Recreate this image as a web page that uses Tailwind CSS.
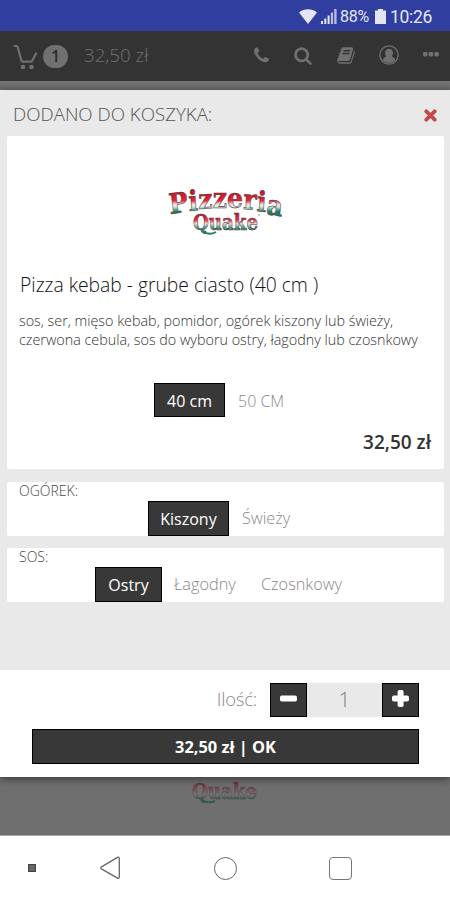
<!DOCTYPE html>
<html lang="pl">
<head>
<meta charset="utf-8">
<title>Pizzeria Quake</title>
<script src="https://cdn.jsdelivr.net/npm/@tailwindcss/browser@4"></script>
</head>
<body class="w-[450px] h-[900px] overflow-hidden flex flex-col bg-white font-['Open_Sans',sans-serif]">

<div class="h-[31px] shrink-0 bg-[#303f9f] flex items-center justify-end pr-[18px] pt-[2px] text-[#e3e5f5] font-['Roboto',sans-serif]">
  <svg class="w-[18px] h-[15px] mr-[4px]" viewBox="0 0 18 15" fill="currentColor"><path d="M0 3.5C5-.8 13-.8 18 3.5L9 15z"/></svg>
  <svg class="w-[16px] h-[15px] mr-[3px]" viewBox="0 0 16 15" fill="currentColor"><path d="M0 12h2v3H0zM3.300 9.500h2V15h-2zM6.600 6.500h2V15h-2z"/><path opacity=".75" d="M9.900 3.500h2.200V15H9.900zM13.200 0h2.400v15h-2.400z"/></svg>
  <span class="text-[16px] leading-[18px] mr-[6px] tracking-[-0.300px]">88%</span>
  <svg class="w-[11px] h-[15px] mr-[4px]" viewBox="0 0 11 15" fill="currentColor"><path d="M3 0h5v1.500h3V15H0V1.500h3z"/></svg>
  <span class="text-[17.500px] leading-[18px] tracking-[-0.3px]">10:26</span>
</div>

<header class="h-[50px] shrink-0 bg-[#333] flex items-center text-[#707070] pl-[13px] pr-[11px]">
  <svg class="w-[25px] h-[26px] mt-[1px]" viewBox="0 0 25 26" fill="none" stroke="currentColor" stroke-width="2.200" stroke-linecap="round" stroke-linejoin="round"><path d="M1.500 2h1.800q1 0 1.400 1.200l3.600 13q.4 1.500 1.900 1.500h7.500q1.200 0 1.700-1.200L23 9.500"/><circle cx="10" cy="23" r="1.200" fill="currentColor"/><circle cx="18.500" cy="23" r="1.200" fill="currentColor"/></svg>
  <span class="w-[25px] h-[23px] ml-[5px] rounded-full bg-[#707070] text-[#2b2b2b] font-semibold text-[16px] leading-[23px] text-center">1</span>
  <span class="ml-[16px] text-[18.700px] font-light leading-6 w-[70px] whitespace-nowrap mb-[2px]">32,50 zł</span>
  <div class="flex-1"></div>
  <svg class="w-[19px] h-[19px] mr-[22px] mb-[2px]" viewBox="0 0 1792 1792" fill="currentColor"><path d="M1600 1240q0 27-10 70.500t-21 68.500q-21 50-122 106-94 51-186 51-27 0-53-3.500t-57.500-12.500-47-14.500-55.500-20.500-49-18q-98-35-175-83-127-79-264-216t-216-264q-48-77-83-175-3-9-18-49t-20.500-55.500-14.500-47-12.500-57.500-3.500-53q0-92 51-186 56-101 106-122 25-11 68.500-21t70.500-10q14 0 21 3 18 6 53 76 11 19 30 54t35 63.500 31 53.500q3 4 17.500 25t21.500 35.500 7 28.500q0 20-28.500 50t-62 55-62 53-28.500 46q0 9 5 22.500t8.500 20.500 14 24 11.500 19q76 137 174 235t235 174q2 1 19 11.500t24 14 20.500 8.500 22.500 5q18 0 46-28.500t53-62 55-62 50-28.500q14 0 28.500 7t35.500 21.500 25 17.500q25 15 53.500 31t63.500 35 54 30q70 35 76 53 3 7 3 21z"/></svg>
  <svg class="w-[20px] h-[19px] mr-[23px] mb-[1px]" viewBox="0 0 1792 1792" fill="currentColor"><path d="M1216 832q0-185-131.500-316.500t-316.500-131.500-316.500 131.500-131.500 316.500 131.500 316.500 316.500 131.500 316.500-131.500 131.500-316.500zm512 832q0 52-38 90t-90 38q-54 0-90-38l-343-342q-179 124-399 124-143 0-273.500-55.500t-225-150-150-225-55.500-273.500 55.500-273.500 150-225 225-150 273.500-55.500 273.500 55.500 225 150 150 225 55.500 273.500q0 220-124 399l343 343q37 37 37 90z"/></svg>
  <svg class="w-[20px] h-[19px] mr-[23px] mb-[2px]" viewBox="0 0 1792 1792" fill="currentColor"><path d="M1703 478q40 57 18 129l-275 906q-19 64-76.500 107.500t-122.500 43.500h-923q-77 0-148.500-53.500t-99.500-131.500q-24-67-2-127 0-4 3-27t4-37q1-8-3-21.500t-3-19.500q2-11 8-21t16.500-23.500 16.500-23.500q23-38 45-91.500t30-91.500q3-10 .5-30t-.5-28q3-11 17-28t17-23q21-36 42-92t25-90q1-9-2.500-32t.5-28q4-13 22-30.500t22-22.500q19-26 42.500-84.500t27.500-96.500q1-8-3-25.500t-2-26.500q2-8 9-18t18-23 17-21q8-12 16.500-30.500t15-35 16-36 19.500-32 26.500-23.500 36-11.500 47.500 5.500l-1 3q38-9 51-9h761q74 0 114 56t18 130l-274 906q-36 119-71.500 153.500t-128.500 34.500h-869q-27 0-38 15-11 16-1 43 24 70 144 70h923q29 0 56-15.500t35-41.500l300-987q7-22 5-57 38 15 59 43zm-1064 2q-4 13 2 22.500t20 9.500h608q13 0 25.500-9.500t16.500-22.500l21-64q4-13-2-22.500t-20-9.500h-608q-13 0-25.500 9.500t-16.500 22.500zm-83 256q-4 13 2 22.500t20 9.500h608q13 0 25.500-9.500t16.500-22.500l21-64q4-13-2-22.500t-20-9.500h-608q-13 0-25.500 9.500t-16.500 22.500z"/></svg>
  <svg class="w-[20px] h-[20px] mr-[24px] mb-[2px]" viewBox="0 0 20 20"><circle cx="10" cy="10" r="9.200" fill="none" stroke="currentColor" stroke-width="1.300"/><path fill="currentColor" d="M10 3.800a4 4.300 0 0 1 2.600 7.600q3.200.7 3.700 4.100Q13.700 18 10 18t-6.300-2.500q.5-3.400 3.700-4.100A4 4.300 0 0 1 10 3.800z"/></svg>
  <svg class="w-[16px] h-[5px] mb-[3px]" viewBox="0 0 16 5" fill="currentColor"><rect width="4.500" height="4.400" rx="1.300"/><rect x="5.700" width="4.500" height="4.400" rx="1.300"/><rect x="11.400" width="4.500" height="4.400" rx="1.300"/></svg>
</header>
<div class="h-[9px] shrink-0 bg-gradient-to-b from-[#767676] to-[#686868]"></div>

<main class="relative z-10 h-[687px] shrink-0 bg-[#e9e9e9] flex flex-col shadow-[0_2px_8px_rgba(0,0,0,0.5)]">
  <div class="h-[46px] shrink-0 flex items-center justify-between pl-[13px] pr-[13px] pt-[3px]">
    <h1 class="text-[18.700px] font-light text-[#555] whitespace-nowrap">DODANO DO KOSZYKA:</h1>
    <svg class="w-[13px] h-[13px] mt-[2px]" viewBox="0 0 13 13" stroke="#c14a4a" stroke-width="3.800" stroke-linecap="round"><path d="M2.300 2.300l8.400 8.400M10.700 2.300l-8.400 8.400"/></svg>
  </div>
  <section class="h-[333px] shrink-0 ml-[7px] mr-[6px] rounded-[2px] bg-white flex flex-col pl-[13px] pr-[13px]">
    <svg class="w-[124px] h-[60px] mt-[44px] self-center shrink-0" viewBox="0 0 124 60" font-family="DejaVu Serif, serif" font-weight="700">
      <defs>
        <linearGradient id="flag" gradientUnits="userSpaceOnUse" x1="0" y1="7" x2="0" y2="35"><stop offset=".1" stop-color="#c81022"/><stop offset=".48" stop-color="#dc2836"/><stop offset=".62" stop-color="#f4e0e0"/><stop offset=".7" stop-color="#dcece4"/><stop offset=".88" stop-color="#168060"/></linearGradient>
        <linearGradient id="flagLow" gradientUnits="userSpaceOnUse" x1="0" y1="31" x2="0" y2="54"><stop offset=".1" stop-color="#c81022"/><stop offset=".4" stop-color="#dc3846"/><stop offset=".55" stop-color="#f0e0e0"/><stop offset=".72" stop-color="#4a9c82"/><stop offset="1" stop-color="#168060"/></linearGradient>
      </defs>
      <text x="6" y="34" dy="0 -3 -2 -1 0 1 2 3" rotate="-7 -4 -2 0 0 3 5 8" font-size="28" fill="url(#flag)" stroke="#54363a" stroke-width=".6" textLength="112" lengthAdjust="spacingAndGlyphs">Pizzeria</text>
      <text x="29" y="50" font-size="22" fill="url(#flagLow)" stroke="#54363a" stroke-width=".6" textLength="65" lengthAdjust="spacingAndGlyphs">Quake</text>
      <path d="M38 51q7 5 14 1" fill="none" stroke="#267e67" stroke-width="2"/>
      <circle cx="95" cy="35" r=".8" fill="#777"/>
    </svg>
    <h2 class="mt-[33px] text-[19.300px] leading-6 font-light text-[#111] whitespace-nowrap">Pizza kebab - grube ciasto (40 cm )</h2>
    <p class="mt-[14px] -ml-[1px] text-[14.350px] leading-[19px] font-light text-[#333] whitespace-nowrap">sos, ser, mięso kebab, pomidor, ogórek kiszony lub świeży,<br>czerwona cebula, sos do wyboru ostry, łagodny lub czosnkowy</p>
    <div class="mt-[34px] ml-[134px] flex items-center h-[34px]">
      <span class="w-[71px] h-[34px] bg-[#383838] border border-black text-white text-[16px] leading-[34px] text-center">40 cm</span>
      <span class="ml-[13px] mt-[1px] text-[16px] font-light text-[#888]">50 CM</span>
    </div>
    <div class="mt-[13px] text-right text-[19px] leading-6 font-semibold text-[#333]">32,50 zł</div>
  </section>
  <section class="mt-[13px] h-[54px] shrink-0 ml-[7px] mr-[6px] rounded-[2px] bg-white">
    <div class="pl-[12px] h-[19px] text-[14px] leading-[17px] font-light text-[#444]">OGÓREK:</div>
    <div class="ml-[141px] flex items-center h-[35px]">
      <span class="w-[81px] h-[35px] bg-[#383838] border border-black text-white text-[16px] leading-[34px] text-center">Kiszony</span>
      <span class="ml-[13px] text-[16.300px] font-light text-[#888]">Świeży</span>
    </div>
  </section>
  <section class="mt-[12px] h-[54px] shrink-0 ml-[7px] mr-[6px] rounded-[2px] bg-white">
    <div class="pl-[12px] h-[19px] text-[14px] leading-[17px] font-light text-[#444]">SOS:</div>
    <div class="ml-[88px] flex items-center h-[35px]">
      <span class="w-[67px] h-[35px] bg-[#383838] border border-black text-white text-[16px] leading-[34px] text-center">Ostry</span>
      <span class="ml-[12px] w-[63px] text-[16.300px] font-light text-[#888]">Łagodny</span>
      <span class="ml-[24px] text-[16.300px] font-light text-[#888]">Czosnkowy</span>
    </div>
  </section>
  <footer class="mt-auto h-[107px] shrink-0 bg-white pt-[12px] pl-[32px] pr-[31px]">
    <div class="flex items-center justify-end h-[35px]">
      <span class="mr-[13px] mb-[2px] text-[18.500px] font-light text-[#888] tracking-[-0.200px]">Ilość:</span>
      <span class="w-[37px] h-[34px] bg-[#383838] border border-black flex items-center justify-center"><svg class="w-[17px] h-[17px] mb-[3px]" viewBox="0 0 17 17" fill="#fff"><rect y="5.600" width="17" height="6" rx="1.800"/></svg></span>
      <span class="w-[75px] h-[34px] bg-[#e9e9e9] text-center text-[20px] leading-[33px] font-light text-[#777]">1</span>
      <span class="w-[37px] h-[34px] bg-[#383838] border border-black flex items-center justify-center"><svg class="w-[17px] h-[17px] mb-[3px]" viewBox="0 0 17 17" fill="#fff"><rect y="5.600" width="17" height="6" rx="1.800"/><rect x="5.600" width="6" height="17" rx="1.800"/></svg></span>
    </div>
    <div class="mt-[12px] h-[35px] bg-[#383838] border border-black text-white text-[16.400px] leading-[34px] font-bold text-center">32,50 zł | OK</div>
  </footer>
</main>

<div class="h-[58px] shrink-0 bg-[#6f6f6f] flex justify-center">
  <svg class="w-[124px] h-[30px]" viewBox="0 0 124 30" font-family="DejaVu Serif, serif" font-weight="700">
    <defs><linearGradient id="dim" gradientUnits="userSpaceOnUse" x1="0" y1="5" x2="0" y2="26"><stop offset=".1" stop-color="#7c3040"/><stop offset=".45" stop-color="#7a5c62"/><stop offset=".6" stop-color="#777"/><stop offset=".85" stop-color="#2c5a4c"/></linearGradient></defs>
    <text x="29" y="22" font-size="22" fill="url(#dim)" stroke="#4a4446" stroke-width=".5" textLength="65" lengthAdjust="spacingAndGlyphs">Quake</text>
    <path d="M38 23q7 4 14 1" fill="none" stroke="#315a50" stroke-width="2"/>
  </svg>
</div>

<nav class="h-[65px] shrink-0 bg-white border-t border-[#aaa] flex items-center">
  <span class="ml-[28px] w-[8px] h-[8px] bg-[#666] border border-[#444]"></span>
  <svg class="ml-[64px] w-[21px] h-[24px]" viewBox="0 0 21 24" fill="none" stroke="#666" stroke-width="1.300" stroke-linejoin="round"><path d="M1.500 10.900L17.500 1.400q1.800-.8 1.800 1v18.700q0 1.800-1.800 1L1.500 12.900q-1.400-1 0-2z"/></svg>
  <span class="ml-[93px] w-[23px] h-[23px] rounded-full border-[1.500px] border-[#666]"></span>
  <span class="ml-[92px] w-[23px] h-[23px] rounded-[4px] border-[1.500px] border-[#777]"></span>
</nav>
</body>
</html>
